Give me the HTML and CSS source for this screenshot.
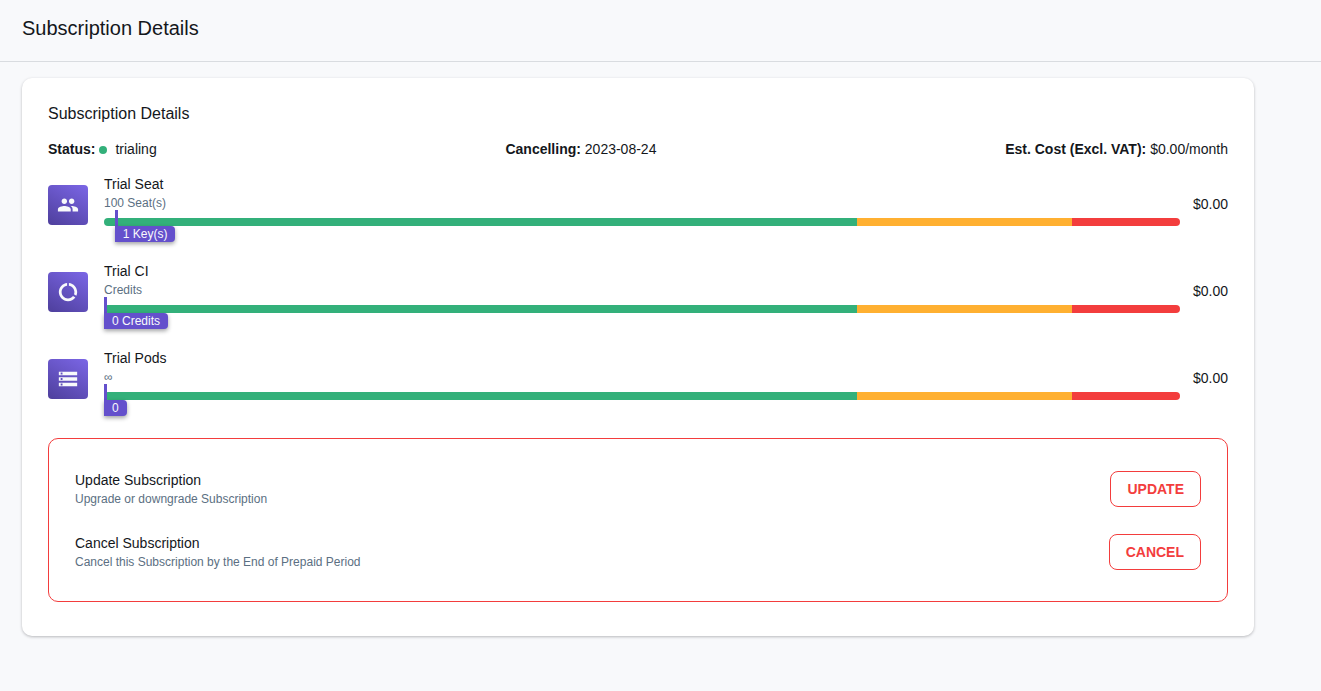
FILE: index.html
```html
<!DOCTYPE html>
<html lang="en">
<head>
<meta charset="utf-8">
<title>Subscription Details</title>
<link rel="stylesheet" href="styles.css">
</head>
<body>
<header class="page-header">
  <h1 class="page-title">Subscription Details</h1>
</header>
<main class="content">
  <section class="card">
    <h2 class="card-title">Subscription Details</h2>
    <div class="summary">
      <div class="status"><b>Status:</b><span class="dot"></span><span>trialing</span></div>
      <div><b>Cancelling:</b> 2023-08-24</div>
      <div><b>Est. Cost (Excl. VAT):</b> $0.00/month</div>
    </div>

    <div class="plans">
      <article class="plan">
        <div class="plan-icon">
          <svg viewBox="0 0 24 24" aria-hidden="true"><path d="M16 11c1.66 0 2.99-1.34 2.99-3S17.66 5 16 5s-3 1.34-3 3 1.34 3 3 3zm-8 0c1.66 0 2.99-1.34 2.99-3S9.66 5 8 5 5 6.340 5 8s1.340 3 3 3zm0 2c-2.330 0-7 1.170-7 3.500V19h14v-2.500c0-2.330-4.670-3.500-7-3.500zm8 0c-.290 0-.620.020-.970.050 1.160.840 1.970 1.970 1.970 3.450V19h6v-2.500c0-2.330-4.670-3.500-7-3.500z"/></svg>
        </div>
        <div class="plan-body">
          <h3 class="item-title">Trial Seat</h3>
          <p class="item-note">100 Seat(s)</p>
          <div class="meter">
            <div class="usage" style="left: 1%"><span class="usage-label">1 Key(s)</span></div>
          </div>
        </div>
        <div class="price">$0.00</div>
      </article>

      <article class="plan">
        <div class="plan-icon">
          <svg viewBox="0 0 24 24" aria-hidden="true"><path d="M13 2.050v3.030c3.390.490 6 3.390 6 6.920 0 .900-.180 1.750-.480 2.540l2.600 1.530c.560-1.240.880-2.620.880-4.070 0-5.180-3.950-9.450-9-9.950zM12 19c-3.870 0-7-3.130-7-7 0-3.530 2.610-6.430 6-6.920V2.050c-5.060.500-9 4.760-9 9.950 0 5.520 4.470 10 9.990 10 3.310 0 6.240-1.610 8.060-4.090l-2.600-1.530C16.170 17.980 14.210 19 12 19z"/></svg>
        </div>
        <div class="plan-body">
          <h3 class="item-title">Trial CI</h3>
          <p class="item-note">Credits</p>
          <div class="meter">
            <div class="usage" style="left: 0%"><span class="usage-label">0 Credits</span></div>
          </div>
        </div>
        <div class="price">$0.00</div>
      </article>

      <article class="plan">
        <div class="plan-icon">
          <svg viewBox="0 0 24 24" aria-hidden="true"><path d="M2 20h20v-4H2v4zm2-3h2v2H4v-2zM2 4v4h20V4H2zm4 3H4V5h2v2zm-4 7h20v-4H2v4zm2-3h2v2H4v-2z"/></svg>
        </div>
        <div class="plan-body">
          <h3 class="item-title">Trial Pods</h3>
          <p class="item-note">∞</p>
          <div class="meter">
            <div class="usage" style="left: 0%"><span class="usage-label">0</span></div>
          </div>
        </div>
        <div class="price">$0.00</div>
      </article>
    </div>

    <div class="actions">
      <div class="action">
        <div>
          <h3 class="item-title">Update Subscription</h3>
          <p class="item-note">Upgrade or downgrade Subscription</p>
        </div>
        <button class="button" type="button">UPDATE</button>
      </div>
      <div class="action">
        <div>
          <h3 class="item-title">Cancel Subscription</h3>
          <p class="item-note">Cancel this Subscription by the End of Prepaid Period</p>
        </div>
        <button class="button" type="button">CANCEL</button>
      </div>
    </div>
  </section>
</main>
</body>
</html>
```

FILE: styles.css
```css
* {
  box-sizing: border-box;
}

body {
  margin: 0;
  background: #f8f9fb;
  color: #14171c;
  font-family: "Liberation Sans", Arial, sans-serif;
  font-size: 14px;
  line-height: 20px;
}

h1, h2, h3, p {
  margin: 0;
  font-weight: 400;
}

.page-header {
  padding: 14px 22px 19px;
  border-bottom: 1px solid #d9dce0;
}

.page-title {
  font-size: 20px;
  line-height: 28px;
}

.content {
  padding: 16px 22px;
}

.card {
  max-width: 1232px;
  padding: 24px 26px 34px;
  border-radius: 10px;
  background: #fff;
  box-shadow: 0 1px 3px rgba(20, 23, 28, 0.28);
}

.card-title {
  font-size: 16px;
  line-height: 24px;
}

.summary {
  display: flex;
  justify-content: space-between;
  margin-top: 13px;
}

.status {
  display: flex;
  align-items: center;
}

.dot {
  width: 8px;
  height: 8px;
  margin: 1px 8px 0 4px;
  border-radius: 50%;
  background: #33b07a;
}

.plans {
  display: grid;
  gap: 25px;
  margin-top: 15px;
}

.plan {
  display: flex;
  align-items: center;
}

.plan-icon {
  display: flex;
  align-items: center;
  justify-content: center;
  width: 40px;
  height: 40px;
  margin-right: 16px;
  border-radius: 4px;
  background: linear-gradient(30deg, #4e3f9c, #7b66e6);
}

.plan-icon svg {
  width: 22px;
  height: 22px;
  fill: #f8f9fb;
}

.plan-body {
  flex: 1;
  padding-bottom: 10px;
}

.item-title {
  font-size: 14px;
  line-height: 20px;
}

.item-note {
  color: #5b6f82;
  font-size: 12px;
  line-height: 18px;
}

.meter {
  position: relative;
  height: 8px;
  margin-top: 6px;
  border-radius: 4px;
  background: linear-gradient(to right, #33b07a 70%, #ffb031 70%, #ffb031 90%, #f33d3d 90%);
}

.usage {
  position: absolute;
  top: -8px;
  padding-top: 16px;
  border-left: 3px solid #6450cc;
}

.usage-label {
  display: block;
  margin-left: -3px;
  padding: 0 8px;
  border-radius: 0 4px 4px 0;
  background: #6450cc;
  box-shadow: 0 2px 4px rgba(20, 23, 28, 0.4);
  color: #f8f9fb;
  font-size: 12px;
  line-height: 16px;
  white-space: nowrap;
}

.price {
  min-width: 48px;
  padding-bottom: 2px;
  text-align: right;
}

.actions {
  display: grid;
  gap: 25px;
  margin-top: 28px;
  padding: 31px 26px 30px;
  border: 1px solid #f33d3d;
  border-radius: 10px;
}

.action {
  display: flex;
  align-items: center;
  justify-content: space-between;
}

.button {
  height: 36px;
  padding: 0 16px;
  border: 1px solid #f33d3d;
  border-radius: 8px;
  background: #fff;
  color: #f33d3d;
  font: 700 14px/20px "Liberation Sans", Arial, sans-serif;
  cursor: pointer;
}
```
